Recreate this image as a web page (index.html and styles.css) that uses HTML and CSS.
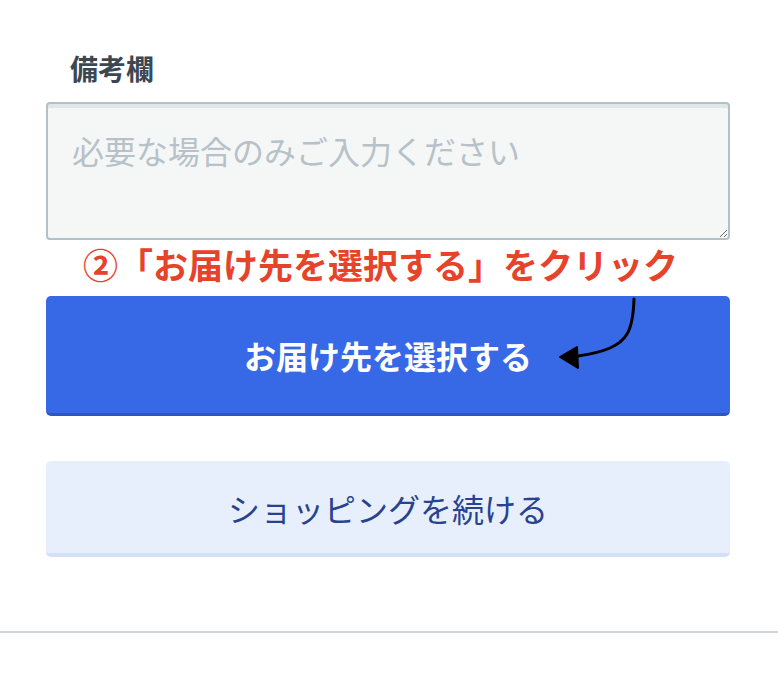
FILE: index.html
```html
<!DOCTYPE html>
<html lang="ja">
<head>
<meta charset="utf-8">
<link rel="stylesheet" href="styles.css">
</head>
<body>
<div class="page">
  <section class="form">
    <label class="label" for="note">備考欄</label>
    <textarea id="note" class="note" placeholder="必要な場合のみご入力ください"></textarea>
    <p class="hint">②「お届け先を選択する」をクリック</p>
    <div class="primary-wrap">
      <button class="btn btn-primary">お届け先を選択する</button>
      <svg class="arrow" width="90" height="80" viewBox="0 0 90 80">
        <path d="M84 3 C 83.5 18, 82 30, 77 38 C 70 50, 55 56, 28 60" fill="none" stroke="#000" stroke-width="3" stroke-linecap="round"/>
        <path d="M10 61 L 27 51 L 28 72 Z" fill="#000" stroke="#000" stroke-width="2" stroke-linejoin="round"/>
      </svg>
    </div>
    <button class="btn btn-secondary">ショッピングを続ける</button>
  </section>
  <hr class="rule">
</div>
</body>
</html>
```
FILE: styles.css
```css
html, body {
  margin: 0;
  padding: 0;
  background: #ffffff;
}
body {
  font-family: "Noto Sans CJK JP", "Noto Sans", sans-serif;
}
.page {
  width: 778px;
}
.form {
  padding: 48px 48px 0 46px;
  display: flex;
  flex-direction: column;
}
.label {
  display: block;
  padding-left: 24px;
  font-size: 28px;
  font-weight: 700;
  color: #3b4751;
  line-height: 40px;
  height: 40px;
  margin-bottom: 14px;
}
.note {
  display: block;
  box-sizing: border-box;
  width: 684px;
  height: 138px;
  margin: 0;
  padding: 26px 24px;
  border: 2px solid #b4c0c7;
  border-radius: 4px;
  background: #f5f7f7;
  box-shadow: inset 0 4px 0 #e1e6e9;
  font-family: "Noto Sans CJK JP", sans-serif;
  font-size: 32px;
  line-height: 40px;
  color: #3b4751;
  resize: vertical;
}
.note::placeholder {
  color: #b7c1c8;
}
.hint {
  margin: 0;
  padding-left: 37px;
  height: 56px;
  line-height: 48px;
  font-size: 35px;
  font-weight: 700;
  color: #e6432b;
  letter-spacing: 0;
  white-space: nowrap;
}
.primary-wrap {
  position: relative;
}
.btn {
  display: block;
  box-sizing: border-box;
  width: 684px;
  margin: 0;
  border: none;
  border-radius: 5px;
  font-family: "Noto Sans CJK JP", sans-serif;
  cursor: pointer;
}
.btn-primary {
  height: 120px;
  background: #3769e7;
  border-bottom: 3px solid #2d56c2;
  color: #ffffff;
  font-size: 32px;
  font-weight: 700;
  padding-top: 2px;
}
.arrow {
  position: absolute;
  left: 504px;
  top: 0;
}
.btn-secondary {
  margin-top: 45px;
  height: 96px;
  background: #e8effc;
  border-bottom: 4px solid #d4e0f8;
  color: #28428f;
  font-size: 32px;
  font-weight: 400;
  padding-top: 2px;
}
.rule {
  margin: 74px 0 0 0;
  border: none;
  border-top: 2px solid #cfd4d8;
  height: 0;
}
```
